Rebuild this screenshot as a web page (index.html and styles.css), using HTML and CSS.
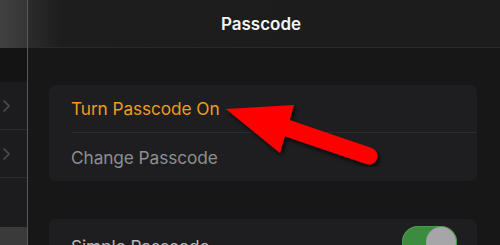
FILE: index.html
```html
<!DOCTYPE html>
<html>
<head>
<meta charset="utf-8">
<link rel="stylesheet" href="styles.css">
</head>
<body>
<div class="page">
  <aside class="sidebar">
    <div class="side-top"></div>
    <div class="side-gap"></div>
    <div class="side-row">
      <svg class="chev" viewBox="0 0 8 14" width="8" height="14"><path d="M1.5 1.5 L7 7 L1.5 12.5" fill="none" stroke="#4c4c4e" stroke-width="1.6"/></svg>
    </div>
    <div class="side-row">
      <svg class="chev" viewBox="0 0 8 14" width="8" height="14"><path d="M1.5 1.5 L7 7 L1.5 12.5" fill="none" stroke="#4c4c4e" stroke-width="1.6"/></svg>
    </div>
    <div class="side-fill"></div>
    <div class="side-bottom"></div>
  </aside>
  <main class="main">
    <header class="header"><h1 class="title">Passcode</h1></header>
    <div class="content">
      <section class="card">
        <div class="row row-first"><span class="label label-accent">Turn Passcode On</span></div>
        <div class="row"><span class="label label-muted">Change Passcode</span></div>
      </section>
      <section class="card card-second">
        <div class="row row-toggle">
          <span class="label label-light">Simple Passcode</span>
          <span class="toggle"><span class="knob"></span></span>
        </div>
      </section>
    </div>
  </main>
  <svg class="arrow" viewBox="0 0 500 245" width="500" height="245">
    <defs>
      <filter id="sh" x="-20%" y="-20%" width="140%" height="140%">
        <feDropShadow dx="2" dy="3" stdDeviation="2" flood-color="#000" flood-opacity="0.7"/>
      </filter>
    </defs>
    <g filter="url(#sh)" fill="#ff0000">
      <polygon points="226,109 294,105 280,153"/>
      <line x1="278" y1="125" x2="369" y2="156" stroke="#ff0000" stroke-width="17" stroke-linecap="round"/>
    </g>
  </svg>
</div>
</body>
</html>
```
FILE: styles.css
```css
* { box-sizing: border-box; margin: 0; padding: 0; }
html, body { width: 500px; height: 245px; overflow: hidden; background: #171717; }
body { font-family: Inter, "Noto Sans", "Liberation Sans", sans-serif; }
.page { position: relative; display: flex; width: 500px; height: 245px; overflow: hidden; }

.sidebar { width: 28px; flex: none; display: flex; flex-direction: column; border-right: 1px solid #58585a; background: #1c1c1e; }
.sidebar > * { flex: none; }
.side-top { height: 48px; background: linear-gradient(90deg, #414141, #353535); }
.side-gap { height: 34px; background: #141414; }
.side-row { height: 48px; display: flex; align-items: center; padding-left: 2px; border-bottom: 1px solid #2a2a2c; }
.sidebar > .side-fill { flex: 1 1 auto; }
.side-bottom { height: 18px; background: #3a3a3a; }
.chev { display: block; }

.main { flex: 1; display: flex; flex-direction: column; min-height: 0; overflow: hidden; }
.header { flex: none; height: 48px; display: flex; align-items: center; justify-content: center; border-bottom: 1px solid #2a2a2a; background: linear-gradient(90deg, #2c2c2c 0px, #1d1d1d 34px, #1c1c1c 100%); }
.title { color: #f4f4f4; font-size: 17px; font-weight: 600; margin-left: -6px; margin-top: 1px; }

.content { flex: none; padding: 37px 23px 0 21px; }
.card { background: #1e1e20; border-radius: 7px; padding-left: 22px; }
.card-second { margin-top: 38px; }
.row { height: 48px; display: flex; align-items: center; }
.row-first { border-bottom: 1px solid #2c2c2e; }
.row-toggle { justify-content: space-between; padding-right: 20px; align-items: flex-start; padding-top: 7px; }
.label { font-size: 17.3px; letter-spacing: -0.1px; }
.label-accent { color: #ee9b1f; }
.label-muted { color: #8e8e90; }
.label-light { color: #b9b9bb; margin-top: 10px; }

.toggle { width: 55px; height: 32px; border-radius: 16px; background: #3c8c40; box-shadow: inset 0 0 0 1px #4a9a4c; position: relative; }
.knob { position: absolute; right: 1px; top: 1px; width: 30px; height: 30px; border-radius: 50%; background: #a6a6a8; }

.arrow { position: absolute; left: 0; top: 0; pointer-events: none; }
```
